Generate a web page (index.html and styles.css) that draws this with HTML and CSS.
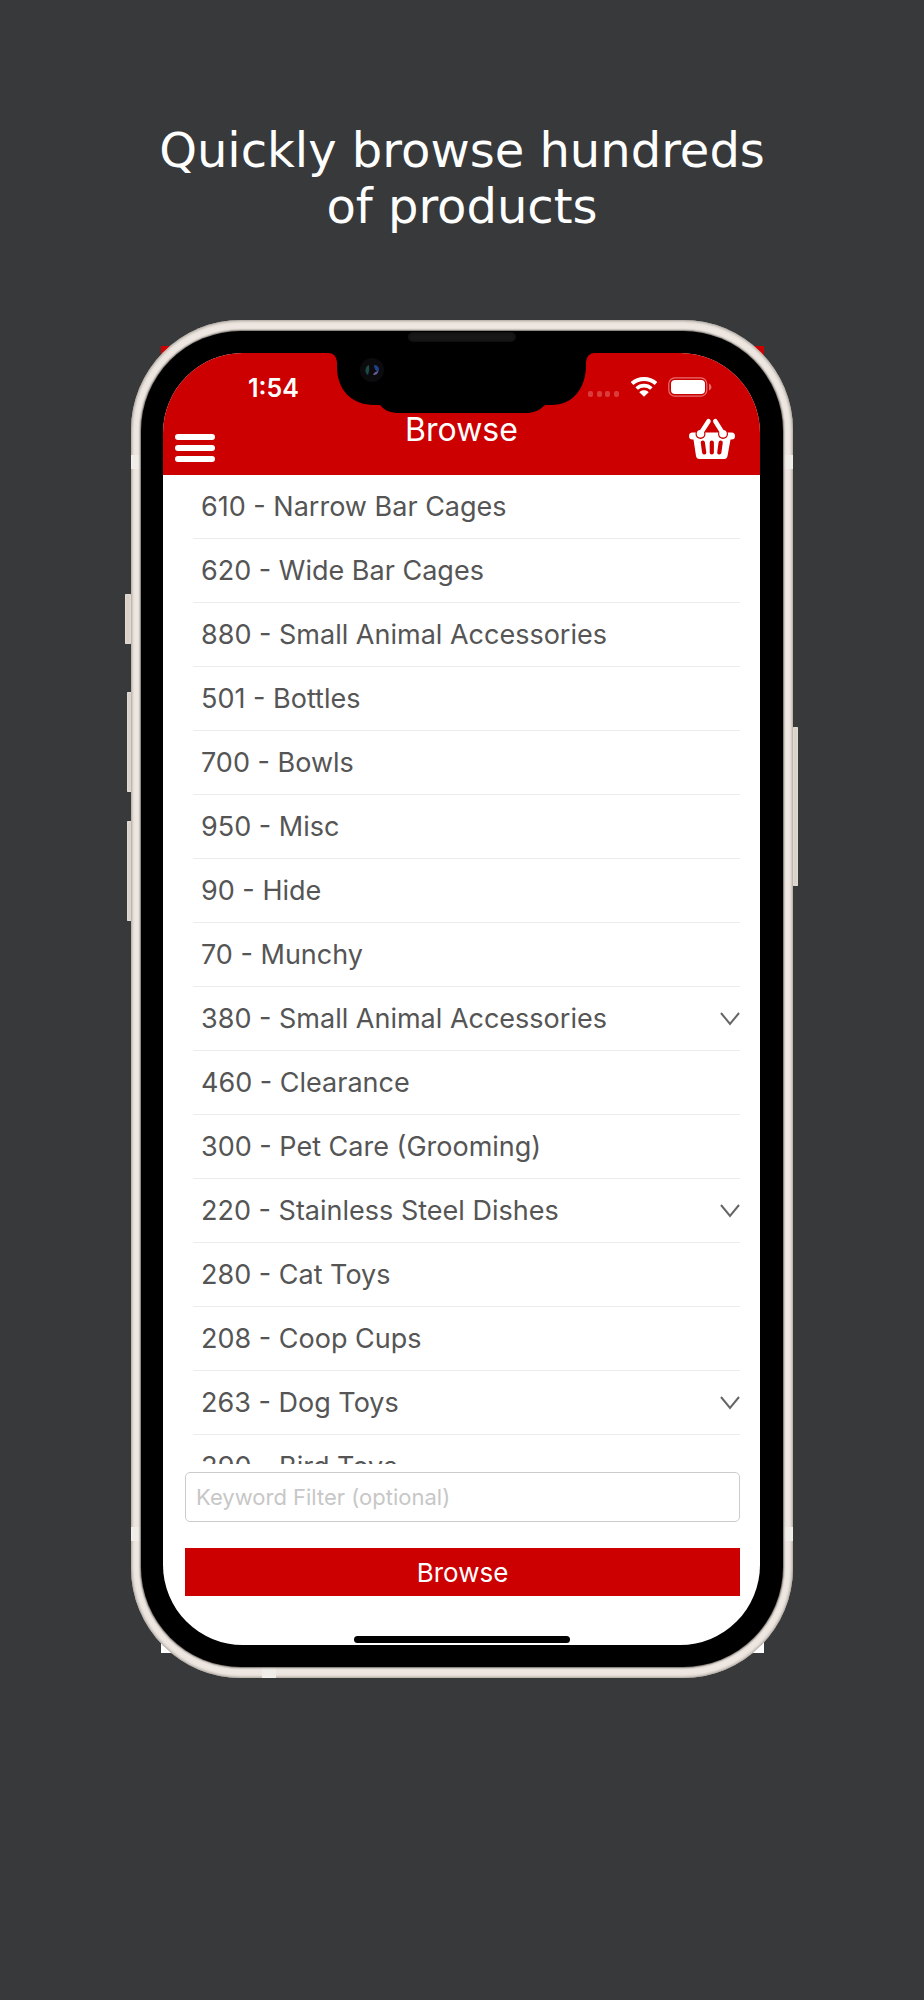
FILE: index.html
```html
<!DOCTYPE html>
<html lang="en">
<head>
<meta charset="utf-8">
<meta name="viewport" content="width=device-width, initial-scale=1">
<title>Browse</title>
<link rel="stylesheet" href="styles.css">
</head>
<body>
<main class="page">
  <h1 class="headline">Quickly browse hundreds<br>of products</h1>
  <div class="phone">
    <div class="backdrop"></div>
    <span class="side-key side-key-mute"></span>
    <span class="side-key side-key-up"></span>
    <span class="side-key side-key-down"></span>
    <span class="side-key side-key-power"></span>
    <div class="frame">
      <span class="band band-left-top"></span>
      <span class="band band-right-top"></span>
      <span class="band band-left-bottom"></span>
      <span class="band band-right-bottom"></span>
      <span class="band band-base"></span>
      <div class="bezel">
        <span class="speaker"></span>
        <svg class="notch" width="284" height="60" viewBox="0 0 284 60" aria-hidden="true">
          <path d="M0 -2H284V0H275Q267 0 266 9C267 36 252 52 232 52H225C219 58 213 60 206 60H79C71 60 65 58 60 52H54C32 52 17 37 17 14V9Q16 0 8 0H0Z" fill="#000"/>
          <circle cx="52" cy="17" r="12" fill="#0b0b0d"/>
          <path d="M49 12c-4 1-5 8-1 10q2-5 1-10z" fill="#1d4a46"/>
          <path d="M54 12c5 0 6 5 4 7q-4-2-4-7z" fill="#20408c"/>
          <path d="M58 18c0 3-2 4-5 4q1-3 5-4z" fill="#6a629c"/>
        </svg>
        <div class="screen">
          <header class="app-header">
            <div class="status">
              <time class="clock">1:54</time>
              <div class="status-icons">
                <svg width="32" height="20" viewBox="0 0 32 20" fill="#da3c3c" aria-hidden="true">
                  <rect x="0" y="14" width="5" height="6" rx="2"/><rect x="9" y="14" width="5" height="6" rx="2"/><rect x="17" y="14" width="5" height="6" rx="2"/><rect x="26" y="14" width="5" height="6" rx="2"/>
                </svg>
                <svg width="28" height="20" viewBox="0 0 28 20" aria-label="Wi-Fi" role="img">
                  <path d="M2 6.6C9 .5 19 .5 26 6.6" fill="none" stroke="#fff" stroke-width="4"/>
                  <path d="M6.6 11.5C11 7.6 17 7.6 21.400 11.5" fill="none" stroke="#fff" stroke-width="3.600"/>
                  <path d="M14 19.700L9.300 15.200C12 12.700 16 12.700 18.700 15.200Z" fill="#fff"/>
                </svg>
                <svg width="44" height="20" viewBox="0 0 44 20" aria-label="Battery" role="img">
                  <rect x=".8" y=".8" width="38" height="18.400" rx="6" fill="none" stroke="#e67070" stroke-width="1.200"/>
                  <rect x="3" y="3" width="34" height="14" rx="4" fill="#fff"/>
                  <path d="M41 6.500q2.500 1 2.500 3.500t-2.500 3.500z" fill="#e67070"/>
                </svg>
              </div>
            </div>
            <nav class="nav">
              <button class="icon-button menu" type="button" aria-label="Menu">
                <svg width="40" height="28" viewBox="0 0 40 28" fill="#fff" aria-hidden="true">
                  <rect width="40" height="6" rx="3"/><rect y="11" width="40" height="6" rx="3"/><rect y="22" width="40" height="6" rx="3"/>
                </svg>
              </button>
              <h2 class="title">Browse</h2>
              <button class="icon-button basket" type="button" aria-label="Basket">
                <svg width="46" height="42" viewBox="0 0 46 42" aria-hidden="true">
                  <path d="M3.500 14.500H42.500A3.500 3.500 0 0 1 42.500 21.500H41.500L38.500 38Q38 41 35 41H10.500Q7.500 41 7 38L4.500 21.500H3.500A3.500 3.500 0 0 1 3.500 14.500Z" fill="#fff"/>
                  <circle cx="11.500" cy="16" r="5" fill="#c00"/><circle cx="34" cy="16" r="5" fill="#c00"/>
                  <g stroke="#fff" stroke-width="4.500" stroke-linecap="round"><path d="M19.500 3.200L11.500 15.500M26.300 3.200L34 15.500"/></g>
                  <circle cx="11.500" cy="15.800" r="3.800" fill="#fff"/><circle cx="34" cy="15.800" r="3.800" fill="#fff"/>
                  <path d="M13.800 24.500L15.200 34.500M22.800 24.500V34.500M31.700 24.500L30.300 34.500" stroke="#c00" stroke-width="4.200" stroke-linecap="round"/>
                </svg>
              </button>
            </nav>
          </header>
          <ul class="list">
            <li><a class="row" href="#">610 - Narrow Bar Cages</a></li>
            <li><a class="row" href="#">620 - Wide Bar Cages</a></li>
            <li><a class="row" href="#">880 - Small Animal Accessories</a></li>
            <li><a class="row" href="#">501 - Bottles</a></li>
            <li><a class="row" href="#">700 - Bowls</a></li>
            <li><a class="row" href="#">950 - Misc</a></li>
            <li><a class="row" href="#">90 - Hide</a></li>
            <li><a class="row" href="#">70 - Munchy</a></li>
            <li><a class="row" href="#">380 - Small Animal Accessories<svg class="chevron" width="20" height="14" viewBox="0 0 20 14" aria-hidden="true"><path d="M1 1L10 12L19 1"/></svg></a></li>
            <li><a class="row" href="#">460 - Clearance</a></li>
            <li><a class="row" href="#">300 - Pet Care (Grooming)</a></li>
            <li><a class="row" href="#">220 - Stainless Steel Dishes<svg class="chevron" width="20" height="14" viewBox="0 0 20 14" aria-hidden="true"><path d="M1 1L10 12L19 1"/></svg></a></li>
            <li><a class="row" href="#">280 - Cat Toys</a></li>
            <li><a class="row" href="#">208 - Coop Cups</a></li>
            <li><a class="row" href="#">263 - Dog Toys<svg class="chevron" width="20" height="14" viewBox="0 0 20 14" aria-hidden="true"><path d="M1 1L10 12L19 1"/></svg></a></li>
            <li><a class="row" href="#">390 - Bird Toys</a></li>
          </ul>
          <form class="filter">
            <input class="keyword" type="text" placeholder="Keyword Filter (optional)" aria-label="Keyword Filter (optional)">
            <button class="submit" type="button">Browse</button>
          </form>
          <div class="home-bar"></div>
        </div>
      </div>
    </div>
  </div>
</main>
</body>
</html>
```

FILE: styles.css
```css
* {
  box-sizing: border-box;
}

body {
  margin: 0;
  min-height: 100vh;
  background: #38393b;
  font-family: Inter, "Liberation Sans", sans-serif;
}

.page {
  padding: 122px 131px 0;
}

.headline {
  margin: 0 -80px 86px;
  color: #fff;
  font: 400 48px/56px "DejaVu Sans", sans-serif;
  text-align: center;
}

.phone {
  position: relative;
  isolation: isolate;
}

.backdrop {
  position: absolute;
  z-index: -1;
  inset: 26px 29px 25px 30px;
  background: linear-gradient(#c00 50%, #fff 50%);
}

.side-key {
  position: absolute;
  width: 5px;
  border-radius: 1px;
  background: #d9d1ca;
  box-shadow: inset 0 0 2px #f8f2ec;
}

.side-key-mute {
  left: -6px;
  top: 274px;
  width: 6px;
  height: 50px;
}

.side-key-up {
  left: -4px;
  top: 372px;
  height: 100px;
}

.side-key-down {
  left: -4px;
  top: 501px;
  height: 100px;
}

.side-key-power {
  right: -5px;
  top: 407px;
  height: 159px;
}

.frame {
  position: relative;
  padding: 11px 10px;
  border-radius: 110px;
  background: #eee7e1;
  box-shadow: inset 0 0 3px 1px #a49c95;
}

.band {
  position: absolute;
  width: 10px;
  height: 14px;
  background: #f1eee9;
}

.band-left-top {
  left: 0;
  top: 135px;
}

.band-right-top {
  right: 0;
  top: 135px;
}

.band-left-bottom {
  left: 0;
  bottom: 137px;
}

.band-right-bottom {
  right: 0;
  bottom: 137px;
}

.band-base {
  left: 131px;
  bottom: 0;
  width: 14px;
  height: 11px;
}

.bezel {
  position: relative;
  padding: 22px 23px 22px 22px;
  border-radius: 100px;
  background: #000;
  box-shadow: 0 0 2px 1px #6d6762;
}

.speaker {
  position: absolute;
  top: 1px;
  left: 50%;
  width: 108px;
  height: 10px;
  margin-left: -54px;
  border-radius: 5px;
  background: #171717;
  box-shadow: inset 0 0 3px #080808;
}

.notch {
  position: absolute;
  z-index: 1;
  top: 22px;
  left: 50%;
  margin-left: -142px;
  overflow: visible;
}

.screen {
  overflow: hidden;
  border-radius: 80px;
  background: #fff;
}

.app-header {
  background: #c00;
  color: #fff;
}

.status {
  display: flex;
  justify-content: space-between;
  height: 54px;
  padding: 20px 48px 0 85px;
}

.clock {
  font-size: 25px;
  font-weight: 600;
  line-height: 30px;
}

.status-icons {
  display: flex;
  gap: 10px;
  padding-top: 4px;
}

.nav {
  display: grid;
  grid-template-columns: 1fr auto 1fr;
  align-items: start;
  height: 68px;
  padding: 0 12px;
}

.icon-button {
  padding: 0;
  border: 0;
  background: none;
  line-height: 0;
}

.menu {
  justify-self: start;
  margin-top: 27px;
}

.basket {
  justify-self: end;
  margin: 11px 13px 0 0;
}

.title {
  margin: 0;
  font-size: 32px;
  font-weight: 400;
  line-height: 46px;
}

.list {
  height: 989px;
  margin: 0;
  padding: 0 20px 0 30px;
  overflow: hidden;
  list-style: none;
}

.row {
  display: flex;
  align-items: center;
  justify-content: space-between;
  height: 64px;
  padding-left: 8px;
  border-bottom: 1px solid #ececec;
  color: #555;
  font-size: 27px;
  text-decoration: none;
}

.chevron {
  fill: none;
  stroke: #666;
  stroke-width: 2;
}

.filter {
  display: flex;
  flex-direction: column;
  gap: 26px;
  padding: 8px 20px 40px 22px;
}

.keyword {
  width: 100%;
  height: 50px;
  padding: 0 10px;
  border: 1px solid #ccc;
  border-radius: 5px;
  background: #fff;
  font: 400 22px Inter, "Liberation Sans", sans-serif;
}

.keyword::placeholder {
  color: #c7c7c7;
}

.submit {
  height: 48px;
  padding: 0;
  border: 0;
  background: #c00;
  color: #fff;
  font: 400 26px Inter, "Liberation Sans", sans-serif;
}

.home-bar {
  width: 216px;
  height: 7px;
  margin: 0 auto 2px;
  border-radius: 4px;
  background: #000;
}
```
